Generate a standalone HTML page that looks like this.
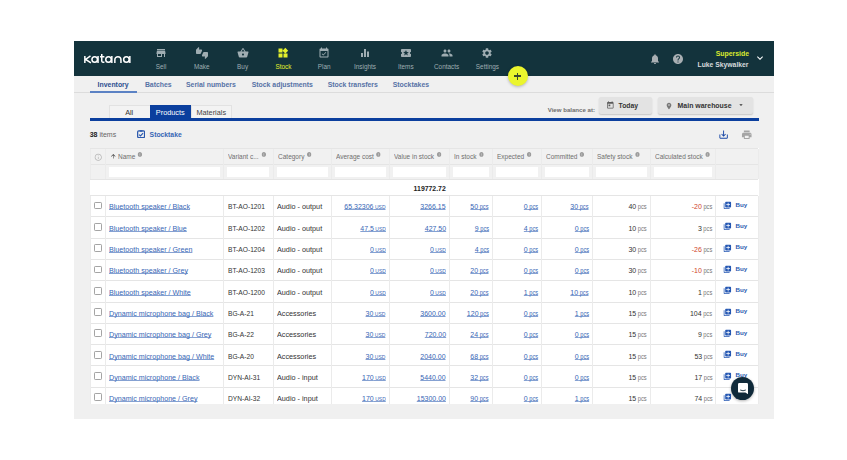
<!DOCTYPE html>
<html><head><meta charset="utf-8"><style>
html,body{margin:0;padding:0;width:847px;height:460px;overflow:hidden;background:#fff;position:relative;font-family:"Liberation Sans",sans-serif}
a{color:#3766b5}
</style></head><body>
<div style="position:absolute;left:74px;top:41px;width:700px;height:378px;background:#f0f0f0"></div>
<div style="position:absolute;left:74px;top:41px;width:700px;height:34.5px;background:#13333c"></div>
<svg style="position:absolute;left:0;top:0;width:847px;height:460px" viewBox="0 0 847 460"><g fill="none" stroke="#fff" stroke-width="1.5"><path d="M84.85 55.9V62.9M90.5 55.9L85.6 59.4L90.9 62.9"/><circle cx="94.7" cy="59.4" r="2.75"/><path d="M98.05 55.9V62.9"/><path d="M101.75 54V61.1Q101.75 62.15 102.8 62.15H104.4M100 56.65H104.4"/><circle cx="108.5" cy="59.4" r="2.75"/><path d="M111.85 55.9V62.9"/><path d="M114.85 62.9V59.7A3.05 3.05 0 0 1 120.95 59.7V62.9"/><circle cx="126.4" cy="59.4" r="2.75"/><path d="M129.85 55.9V62.9"/></g></svg>
<svg style="position:absolute;left:155.0px;top:46.5px;width:12px;height:12px" viewBox="0 0 24 24"><path fill="#9fadb2" d="M20 4H4v2h16V4zm1 10v-2l-1-5H4l-1 5v2h1v6h10v-6h4v6h2v-6h1zm-9 4H6v-4h6v4z"/></svg>
<div style="position:absolute;left:61.0px;width:200px;text-align:center;top:63.8px;font-size:6.4px;line-height:6.4px;color:#9fadb2;font-weight:400;white-space:nowrap">Sell</div>
<svg style="position:absolute;left:195.8px;top:46.5px;width:12px;height:12px" viewBox="0 0 24 24"><path fill="#9fadb2" d="M12 6c0-.55-.45-1-1-1H5.82l.66-3.18.02-.23c0-.31-.13-.59-.33-.8L5.38 0 .44 4.94C.17 5.21 0 5.59 0 6v6.5c0 .83.67 1.5 1.5 1.5h6.75c.62 0 1.15-.38 1.38-.91l2.26-5.29c.07-.17.11-.36.11-.55V6zm10.5 4h-6.750c-.62 0-1.15.38-1.38.91l-2.26 5.29c-.07.17-.11.36-.11.55V18c0 .55.45 1 1 1h5.18l-.66 3.18-.02.24c0 .31.13.59.33.8l.79.78 4.94-4.94c.27-.27.44-.65.44-1.06v-6.5c0-.83-.67-1.5-1.5-1.5z"/></svg>
<div style="position:absolute;left:101.80000000000001px;width:200px;text-align:center;top:63.8px;font-size:6.4px;line-height:6.4px;color:#9fadb2;font-weight:400;white-space:nowrap">Make</div>
<svg style="position:absolute;left:236.6px;top:46.5px;width:12px;height:12px" viewBox="0 0 24 24"><path fill="#9fadb2" d="M17.21 9l-4.38-6.56c-.19-.28-.51-.42-.83-.42-.32 0-.64.14-.83.43L6.79 9H2c-.55 0-1 .45-1 1 0 .09.01.18.04.27l2.54 9.27c.23.84 1 1.460 1.920 1.46h13c.92 0 1.69-.62 1.93-1.46l2.54-9.27L23 10c0-.55-.45-1-1-1h-4.79zM9 9l3-4.4L15 9H9zm3 8c-1.1 0-2-.9-2-2s.9-2 2-2 2 .9 2 2-.9 2-2 2z"/></svg>
<div style="position:absolute;left:142.6px;width:200px;text-align:center;top:63.8px;font-size:6.4px;line-height:6.4px;color:#9fadb2;font-weight:400;white-space:nowrap">Buy</div>
<svg style="position:absolute;left:277.4px;top:46.5px;width:12px;height:12px" viewBox="0 0 24 24"><path fill="#e3f02c" d="M13 13v8h8v-8h-8zM3 21h8v-8H3v8zM3 3v8h8V3H3zm13.66-1.31L11 7.34 16.66 13l5.66-5.66-5.66-5.65z"/></svg>
<div style="position:absolute;left:183.39999999999998px;width:200px;text-align:center;top:63.8px;font-size:6.4px;line-height:6.4px;color:#e3f02c;font-weight:400;white-space:nowrap">Stock</div>
<svg style="position:absolute;left:318.2px;top:46.5px;width:12px;height:12px" viewBox="0 0 24 24"><path fill="#9fadb2" d="M16.53 11.06L15.47 10l-4.88 4.88-2.12-2.12-1.06 1.06L10.59 17l5.94-5.94zM19 3h-1V1h-2v2H8V1H6v2H5c-1.11 0-1.99.9-1.99 2L3 19c0 1.1.89 2 2 2h14c1.1 0 2-.9 2-2V5c0-1.1-.9-2-2-2zm0 16H5V8h14v11z"/></svg>
<div style="position:absolute;left:224.2px;width:200px;text-align:center;top:63.8px;font-size:6.4px;line-height:6.4px;color:#9fadb2;font-weight:400;white-space:nowrap">Plan</div>
<svg style="position:absolute;left:359.0px;top:46.5px;width:12px;height:12px" viewBox="0 0 24 24"><path fill="#9fadb2" d="M10 20h4V4h-4v16zm-6 0h4v-8H4v8zM16 9v11h4V9h-4z"/></svg>
<div style="position:absolute;left:265.0px;width:200px;text-align:center;top:63.8px;font-size:6.4px;line-height:6.4px;color:#9fadb2;font-weight:400;white-space:nowrap">Insights</div>
<svg style="position:absolute;left:399.79999999999995px;top:46.5px;width:12px;height:12px" viewBox="0 0 24 24"><path fill="#9fadb2" d="M20 12c0-1.1.9-2 2-2V6c0-1.1-.9-2-2-2H4c-1.1 0-1.99.9-1.99 2v4c1.1 0 1.99.9 1.99 2s-.89 2-2 2v4c0 1.1.9 2 2 2h16c1.1 0 2-.9 2-2v-4c-1.1 0-2-.9-2-2zm-4.42 4.8L12 14.5l-3.58 2.3 1.08-4.12-3.29-2.69 4.24-.25L12 5.8l1.54 3.95 4.24.25-3.29 2.69 1.09 4.11z"/></svg>
<div style="position:absolute;left:305.79999999999995px;width:200px;text-align:center;top:63.8px;font-size:6.4px;line-height:6.4px;color:#9fadb2;font-weight:400;white-space:nowrap">Items</div>
<svg style="position:absolute;left:440.59999999999997px;top:46.5px;width:12px;height:12px" viewBox="0 0 24 24"><path fill="#9fadb2" d="M16 11c1.66 0 2.99-1.34 2.99-3S17.66 5 16 5c-1.66 0-3 1.34-3 3s1.34 3 3 3zm-8 0c1.66 0 2.99-1.34 2.99-3S9.66 5 8 5C6.34 5 5 6.34 5 8s1.34 3 3 3zm0 2c-2.33 0-7 1.17-7 3.5V19h14v-2.5c0-2.33-4.67-3.5-7-3.5zm8 0c-.29 0-.62.02-.97.05 1.16.84 1.970 1.97 1.97 3.45V19h6v-2.5c0-2.33-4.67-3.5-7-3.5z"/></svg>
<div style="position:absolute;left:346.59999999999997px;width:200px;text-align:center;top:63.8px;font-size:6.4px;line-height:6.4px;color:#9fadb2;font-weight:400;white-space:nowrap">Contacts</div>
<svg style="position:absolute;left:481.4px;top:46.5px;width:12px;height:12px" viewBox="0 0 24 24"><path fill="#9fadb2" d="M19.14 12.94c.04-.3.06-.61.06-.94 0-.32-.02-.64-.07-.94l2.03-1.58c.18-.14.23-.41.12-.61l-1.92-3.32c-.12-.22-.37-.29-.59-.22l-2.39.96c-.5-.38-1.03-.7-1.62-.94l-.36-2.54c-.04-.24-.24-.41-.48-.41h-3.84c-.24 0-.43.17-.47.41l-.36 2.54c-.59.24-1.13.57-1.62.94l-2.390-.96c-.22-.08-.47 0-.59.22L2.74 8.87c-.12.21-.08.47.12.61l2.03 1.58c-.05.3-.09.63-.09.94s.02.64.07.94l-2.03 1.58c-.18.14-.23.41-.12.61l1.92 3.32c.12.22.37.29.59.22l2.39-.96c.5.38 1.03.7 1.62.94l.36 2.54c.05.24.24.41.48.41h3.84c.24 0 .44-.17.47-.41l.36-2.54c.59-.24 1.13-.56 1.62-.94l2.39.96c.22.08.47 0 .59-.22l1.92-3.32c.12-.22.07-.47-.12-.61l-2.01-1.58zM12 15.6c-1.98 0-3.6-1.62-3.6-3.6s1.62-3.6 3.6-3.6 3.6 1.62 3.6 3.6-1.62 3.6-3.6 3.6z"/></svg>
<div style="position:absolute;left:387.4px;width:200px;text-align:center;top:63.8px;font-size:6.4px;line-height:6.4px;color:#9fadb2;font-weight:400;white-space:nowrap">Settings</div>
<div style="position:absolute;left:507.8px;top:66px;width:20px;height:20px;border-radius:50%;background:#ebf52d;box-shadow:0 1px 3px rgba(0,0,0,0.25)"></div>
<div style="position:absolute;left:514.3px;top:75.35px;width:7px;height:1.3px;background:#3a4530"></div>
<div style="position:absolute;left:517.15px;top:72.5px;width:1.3px;height:7px;background:#3a4530"></div>
<svg style="position:absolute;left:648.8px;top:52.6px;width:12px;height:12px" viewBox="0 0 24 24"><path fill="#a9afb3" d="M12 22c1.1 0 2-.9 2-2h-4c0 1.1.89 2 2 2zm6-6v-5c0-3.07-1.64-5.64-4.5-6.32V4c0-.83-.67-1.5-1.5-1.5s-1.5.67-1.5 1.5v.68C7.63 5.36 6 7.92 6 11v5l-2 2v1h16v-1l-2-2z"/></svg>
<svg style="position:absolute;left:672.2px;top:53.0px;width:12px;height:12px" viewBox="0 0 24 24"><path fill="#a9afb3" d="M12 2C6.48 2 2 6.48 2 12s4.48 10 10 10 10-4.48 10-10S17.52 2 12 2zm1 17h-2v-2h2v2zm2.07-7.75l-.9.92C13.45 12.9 13 13.5 13 15h-2v-.5c0-1.1.45-2.1 1.17-2.83l1.24-1.26c.37-.36.59-.86.59-1.41 0-1.1-.9-2-2-2s-2 .9-2 2H8c0-2.21 1.79-4 4-4s4 1.79 4 4c0 .88-.36 1.68-.93 2.25z"/></svg>
<div style="position:absolute;right:98px;top:51.4px;font-size:6.9px;line-height:6.9px;color:#d9ea2e;font-weight:700;white-space:nowrap">Superside</div>
<div style="position:absolute;right:98.5px;top:61.6px;font-size:6.8px;line-height:6.8px;color:#d6dbdd;font-weight:700;white-space:nowrap">Luke Skywalker</div>
<svg style="position:absolute;left:754.3px;top:52.3px;width:12px;height:12px" viewBox="0 0 24 24"><path fill="#ffffff" d="M16.59 8.59L12 13.17 7.41 8.59 6 10l6 6 6-6z"/></svg>
<div style="position:absolute;left:74px;top:92px;width:700px;height:1px;background:#dcdcdc"></div>
<div style="position:absolute;left:97.6px;top:81.6px;font-size:6.9px;line-height:6.9px;color:#2b4e8f;font-weight:700;white-space:nowrap">Inventory</div>
<div style="position:absolute;left:144.9px;top:81.6px;font-size:6.9px;line-height:6.9px;color:#5672a6;font-weight:700;white-space:nowrap">Batches</div>
<div style="position:absolute;left:186px;top:81.6px;font-size:6.9px;line-height:6.9px;color:#5672a6;font-weight:700;white-space:nowrap">Serial numbers</div>
<div style="position:absolute;left:251.7px;top:81.6px;font-size:6.9px;line-height:6.9px;color:#5672a6;font-weight:700;white-space:nowrap">Stock adjustments</div>
<div style="position:absolute;left:327.7px;top:81.6px;font-size:6.9px;line-height:6.9px;color:#5672a6;font-weight:700;white-space:nowrap">Stock transfers</div>
<div style="position:absolute;left:392.7px;top:81.6px;font-size:6.9px;line-height:6.9px;color:#5672a6;font-weight:700;white-space:nowrap">Stocktakes</div>
<div style="position:absolute;left:90px;top:91px;width:46.5px;height:2px;background:#5b82c4"></div>
<div style="position:absolute;left:109px;top:104.5px;width:81.5px;height:13.5px;background:#f3f3f3;border:0.5px solid #e2e2e2;border-bottom:none;box-sizing:border-box"></div>
<div style="position:absolute;left:190.5px;top:104.5px;width:41.5px;height:13.5px;background:#f3f3f3;border:0.5px solid #e2e2e2;border-bottom:none;box-sizing:border-box"></div>
<div style="position:absolute;left:150px;top:104.5px;width:40.5px;height:13.5px;background:#0b3f9e"></div>
<div style="position:absolute;left:29.19999999999999px;width:200px;text-align:center;top:108.9px;font-size:7.3px;line-height:7.3px;color:#333;font-weight:400;white-space:nowrap">All</div>
<div style="position:absolute;left:70.25px;width:200px;text-align:center;top:108.9px;font-size:7.3px;line-height:7.3px;color:#fff;font-weight:400;white-space:nowrap">Products</div>
<div style="position:absolute;left:111.25px;width:200px;text-align:center;top:108.9px;font-size:7.3px;line-height:7.3px;color:#444;font-weight:400;white-space:nowrap">Materials</div>
<div style="position:absolute;left:89.5px;top:118px;width:669px;height:2.8px;background:#0b3f9e"></div>
<div style="position:absolute;right:252px;top:107.4px;font-size:6.1px;line-height:6.1px;color:#6e6e6e;font-weight:700;white-space:nowrap">View balance at:</div>
<div style="position:absolute;left:598.5px;top:97.3px;width:53px;height:17px;background:#e3e3e3;border-radius:2px;box-shadow:0 1px 1.5px rgba(0,0,0,0.18)"></div>
<svg style="position:absolute;left:606.3px;top:101.3px;width:8.6px;height:8.6px" viewBox="0 0 24 24"><path fill="#5a5a5a" d="M19 3h-1V1h-2v2H8V1H6v2H5c-1.11 0-1.99.9-1.99 2L3 19c0 1.1.89 2 2 2h14c1.1 0 2-.9 2-2V5c0-1.1-.9-2-2-2zm0 16H5V8h14v11zM7 10h5v5H7z"/></svg>
<div style="position:absolute;left:618.5px;top:103px;font-size:6.8px;line-height:6.8px;color:#333;font-weight:700;white-space:nowrap">Today</div>
<div style="position:absolute;left:657.8px;top:97.4px;width:95px;height:17px;background:#e3e3e3;border-radius:2px;box-shadow:0 1px 1.5px rgba(0,0,0,0.18)"></div>
<svg style="position:absolute;left:665.2px;top:101.5px;width:8px;height:8px" viewBox="0 0 24 24"><path fill="#777" d="M12 2C8.13 2 5 5.130 5 9c0 5.25 7 13 7 13s7-7.75 7-13c0-3.87-3.13-7-7-7zm0 9.5c-1.38 0-2.5-1.12-2.5-2.5s1.12-2.5 2.5-2.5 2.5 1.12 2.5 2.5-1.12 2.5-2.5 2.5z"/></svg>
<div style="position:absolute;left:677.6px;top:103px;font-size:6.95px;line-height:6.95px;color:#333;font-weight:700;white-space:nowrap">Main warehouse</div>
<svg style="position:absolute;left:737px;top:101px;width:8px;height:8px" viewBox="0 0 24 24"><path fill="#333" d="M7 10l5 5 5-5z"/></svg>
<div style="position:absolute;left:89.7px;top:130.6px;font-size:7px;line-height:7px;white-space:nowrap"><b style="color:#222">38</b> <span style="color:#666">items</span></div>
<svg style="position:absolute;left:136.8px;top:129.8px;width:8.2px;height:8.2px" viewBox="0 0 8.2 8.2"><rect x="0.65" y="1.0" width="6.9" height="6.55" rx="1" fill="none" stroke="#2a58ad" stroke-width="1.25"/><rect x="2.5" y="0.2" width="3.2" height="1.5" rx="0.6" fill="#2a58ad"/><path d="M2.1 4.6L3.5 5.9L6.1 3.1" fill="none" stroke="#2a58ad" stroke-width="1.15"/></svg>
<div style="position:absolute;left:149.6px;top:131.6px;font-size:6.8px;line-height:6.8px;color:#3766b5;font-weight:700;white-space:nowrap">Stocktake</div>
<svg style="position:absolute;left:717.9px;top:128.6px;width:11.2px;height:11.2px" viewBox="0 0 24 24"><path fill="#1746a6" d="M19 12v7H5v-7H3v7c0 1.1.9 2 2 2h14c1.1 0 2-.9 2-2v-7h-2zm-6 .67l2.59-2.58L17 11.5l-5 5-5-5 1.41-1.41L11 12.67V3h2z"/></svg>
<svg style="position:absolute;left:741.2px;top:129.1px;width:11.5px;height:11.5px" viewBox="0 0 24 24"><path fill="#a5a5a5" d="M19 8H5c-1.66 0-3 1.34-3 3v6h4v4h12v-4h4v-6c0-1.66-1.34-3-3-3zm-3 11H8v-5h8v5zm3-7c-.55 0-1-.45-1-1s.45-1 1-1 1 .45 1 1-.45 1-1 1zm-1-9H6v4h12V3z"/></svg>
<div style="position:absolute;left:89.5px;top:148.0px;width:669.4px;height:255.60000000000002px;overflow:hidden;background:#fff">
<div style="position:absolute;left:0;top:0;width:668.4px;height:31.2px;background:#f1f1f1"></div>
<div style="position:absolute;left:0;top:0.0px;width:668.4px;height:1px;background:#e5e5e5"></div>
<div style="position:absolute;left:0;top:15.8px;width:668.4px;height:1px;background:#e5e5e5"></div>
<div style="position:absolute;left:0;top:30.7px;width:668.4px;height:1px;background:#e5e5e5"></div>
<div style="position:absolute;left:0;top:47.0px;width:668.4px;height:1px;background:#e5e5e5"></div>
<div style="position:absolute;left:0;top:68.3px;width:668.4px;height:1px;background:#e5e5e5"></div>
<div style="position:absolute;left:0;top:89.6px;width:668.4px;height:1px;background:#e5e5e5"></div>
<div style="position:absolute;left:0;top:110.9px;width:668.4px;height:1px;background:#e5e5e5"></div>
<div style="position:absolute;left:0;top:132.2px;width:668.4px;height:1px;background:#e5e5e5"></div>
<div style="position:absolute;left:0;top:153.5px;width:668.4px;height:1px;background:#e5e5e5"></div>
<div style="position:absolute;left:0;top:174.8px;width:668.4px;height:1px;background:#e5e5e5"></div>
<div style="position:absolute;left:0;top:196.1px;width:668.4px;height:1px;background:#e5e5e5"></div>
<div style="position:absolute;left:0;top:217.4px;width:668.4px;height:1px;background:#e5e5e5"></div>
<div style="position:absolute;left:0;top:238.7px;width:668.4px;height:1px;background:#e5e5e5"></div>
<div style="position:absolute;left:0;top:260.0px;width:668.4px;height:1px;background:#e5e5e5"></div>
<div style="position:absolute;left:0.0px;top:0.5px;width:1px;height:30.69999999999999px;background:#ebebeb"></div>
<div style="position:absolute;left:0.0px;top:47.5px;width:1px;height:208.10000000000002px;background:#ebebeb"></div>
<div style="position:absolute;left:15.7px;top:0.5px;width:1px;height:30.69999999999999px;background:#ebebeb"></div>
<div style="position:absolute;left:15.7px;top:47.5px;width:1px;height:208.10000000000002px;background:#ebebeb"></div>
<div style="position:absolute;left:133.6px;top:0.5px;width:1px;height:30.69999999999999px;background:#ebebeb"></div>
<div style="position:absolute;left:133.6px;top:47.5px;width:1px;height:208.10000000000002px;background:#ebebeb"></div>
<div style="position:absolute;left:183.2px;top:0.5px;width:1px;height:30.69999999999999px;background:#ebebeb"></div>
<div style="position:absolute;left:183.2px;top:47.5px;width:1px;height:208.10000000000002px;background:#ebebeb"></div>
<div style="position:absolute;left:241.5px;top:0.5px;width:1px;height:30.69999999999999px;background:#ebebeb"></div>
<div style="position:absolute;left:241.5px;top:47.5px;width:1px;height:208.10000000000002px;background:#ebebeb"></div>
<div style="position:absolute;left:299.5px;top:0.5px;width:1px;height:30.69999999999999px;background:#ebebeb"></div>
<div style="position:absolute;left:299.5px;top:47.5px;width:1px;height:208.10000000000002px;background:#ebebeb"></div>
<div style="position:absolute;left:359.6px;top:0.5px;width:1px;height:30.69999999999999px;background:#ebebeb"></div>
<div style="position:absolute;left:359.6px;top:47.5px;width:1px;height:208.10000000000002px;background:#ebebeb"></div>
<div style="position:absolute;left:402.5px;top:0.5px;width:1px;height:30.69999999999999px;background:#ebebeb"></div>
<div style="position:absolute;left:402.5px;top:47.5px;width:1px;height:208.10000000000002px;background:#ebebeb"></div>
<div style="position:absolute;left:451.5px;top:0.5px;width:1px;height:30.69999999999999px;background:#ebebeb"></div>
<div style="position:absolute;left:451.5px;top:47.5px;width:1px;height:208.10000000000002px;background:#ebebeb"></div>
<div style="position:absolute;left:502.5px;top:0.5px;width:1px;height:30.69999999999999px;background:#ebebeb"></div>
<div style="position:absolute;left:502.5px;top:47.5px;width:1px;height:208.10000000000002px;background:#ebebeb"></div>
<div style="position:absolute;left:560.4px;top:0.5px;width:1px;height:30.69999999999999px;background:#ebebeb"></div>
<div style="position:absolute;left:560.4px;top:47.5px;width:1px;height:208.10000000000002px;background:#ebebeb"></div>
<div style="position:absolute;left:625.5px;top:0.5px;width:1px;height:30.69999999999999px;background:#ebebeb"></div>
<div style="position:absolute;left:625.5px;top:47.5px;width:1px;height:208.10000000000002px;background:#ebebeb"></div>
<div style="position:absolute;left:668.4px;top:0.5px;width:1px;height:30.69999999999999px;background:#ebebeb"></div>
<div style="position:absolute;left:668.4px;top:47.5px;width:1px;height:208.10000000000002px;background:#ebebeb"></div>
<div style="position:absolute;left:19.5px;top:19.0px;width:110.79999999999998px;height:10px;background:#fff"></div>
<div style="position:absolute;left:137.4px;top:19.0px;width:42.49999999999997px;height:10px;background:#fff"></div>
<div style="position:absolute;left:187.0px;top:19.0px;width:51.19999999999999px;height:10px;background:#fff"></div>
<div style="position:absolute;left:245.3px;top:19.0px;width:50.89999999999998px;height:10px;background:#fff"></div>
<div style="position:absolute;left:303.3px;top:19.0px;width:53.0px;height:10px;background:#fff"></div>
<div style="position:absolute;left:363.4px;top:19.0px;width:35.799999999999955px;height:10px;background:#fff"></div>
<div style="position:absolute;left:406.3px;top:19.0px;width:41.900000000000034px;height:10px;background:#fff"></div>
<div style="position:absolute;left:455.3px;top:19.0px;width:43.90000000000009px;height:10px;background:#fff"></div>
<div style="position:absolute;left:506.3px;top:19.0px;width:50.80000000000007px;height:10px;background:#fff"></div>
<div style="position:absolute;left:564.2px;top:19.0px;width:58.000000000000114px;height:10px;background:#fff"></div>
<svg style="position:absolute;left:4.1px;top:4.8px;width:8.5px;height:8.5px" viewBox="0 0 24 24"><path fill="#b5b5b5" d="M11 7h2v2h-2zm0 4h2v6h-2zm1-9C6.48 2 2 6.48 2 12s4.48 10 10 10 10-4.48 10-10S17.52 2 12 2zm0 18c-4.41 0-8-3.59-8-8s3.59-8 8-8 8 3.59 8 8-3.59 8-8 8z"/></svg>
<svg style="position:absolute;left:20.6px;top:5.1px;width:6.6px;height:6.6px" viewBox="0 0 24 24"><path fill="#444" d="M4 12l1.41 1.41L11 7.83V20h2V7.83l5.58 5.59L20 12l-8-8-8 8z"/></svg>
<div style="position:absolute;left:28.2px;top:4.6px;font-size:7px;line-height:7px;color:#6f6f6f;white-space:nowrap"><span style="position:relative;display:inline-block;transform:scaleX(0.93);transform-origin:left">Name<svg style="position:absolute;width:5.1px;height:4.8px;right:-7.7px;top:-0.5px" viewBox="2 2 20 20"><path fill="#9c9c9c" d="M12 2C6.48 2 2 6.48 2 12s4.48 10 10 10 10-4.48 10-10S17.52 2 12 2zm1 15h-2v-6h2v6zm0-8h-2V7h2v2z"/></svg></span></div>
<div style="position:absolute;left:138.4px;top:4.6px;font-size:7px;line-height:7px;color:#6f6f6f;white-space:nowrap"><span style="position:relative;display:inline-block;transform:scaleX(0.93);transform-origin:left">Variant c...<svg style="position:absolute;width:5.1px;height:4.8px;right:-7.7px;top:-0.5px" viewBox="2 2 20 20"><path fill="#9c9c9c" d="M12 2C6.48 2 2 6.48 2 12s4.48 10 10 10 10-4.48 10-10S17.52 2 12 2zm1 15h-2v-6h2v6zm0-8h-2V7h2v2z"/></svg></span></div>
<div style="position:absolute;left:188.0px;top:4.6px;font-size:7px;line-height:7px;color:#6f6f6f;white-space:nowrap"><span style="position:relative;display:inline-block;transform:scaleX(0.93);transform-origin:left">Category<svg style="position:absolute;width:5.1px;height:4.8px;right:-7.7px;top:-0.5px" viewBox="2 2 20 20"><path fill="#9c9c9c" d="M12 2C6.48 2 2 6.48 2 12s4.48 10 10 10 10-4.48 10-10S17.52 2 12 2zm1 15h-2v-6h2v6zm0-8h-2V7h2v2z"/></svg></span></div>
<div style="position:absolute;left:246.3px;top:4.6px;font-size:7px;line-height:7px;color:#6f6f6f;white-space:nowrap"><span style="position:relative;display:inline-block;transform:scaleX(0.93);transform-origin:left">Average cost<svg style="position:absolute;width:5.1px;height:4.8px;right:-7.7px;top:-0.5px" viewBox="2 2 20 20"><path fill="#9c9c9c" d="M12 2C6.48 2 2 6.48 2 12s4.48 10 10 10 10-4.48 10-10S17.52 2 12 2zm1 15h-2v-6h2v6zm0-8h-2V7h2v2z"/></svg></span></div>
<div style="position:absolute;left:304.3px;top:4.6px;font-size:7px;line-height:7px;color:#6f6f6f;white-space:nowrap"><span style="position:relative;display:inline-block;transform:scaleX(0.93);transform-origin:left">Value in stock<svg style="position:absolute;width:5.1px;height:4.8px;right:-7.7px;top:-0.5px" viewBox="2 2 20 20"><path fill="#9c9c9c" d="M12 2C6.48 2 2 6.48 2 12s4.48 10 10 10 10-4.48 10-10S17.52 2 12 2zm1 15h-2v-6h2v6zm0-8h-2V7h2v2z"/></svg></span></div>
<div style="position:absolute;left:364.4px;top:4.6px;font-size:7px;line-height:7px;color:#6f6f6f;white-space:nowrap"><span style="position:relative;display:inline-block;transform:scaleX(0.93);transform-origin:left">In stock<svg style="position:absolute;width:5.1px;height:4.8px;right:-7.7px;top:-0.5px" viewBox="2 2 20 20"><path fill="#9c9c9c" d="M12 2C6.48 2 2 6.48 2 12s4.48 10 10 10 10-4.48 10-10S17.52 2 12 2zm1 15h-2v-6h2v6zm0-8h-2V7h2v2z"/></svg></span></div>
<div style="position:absolute;left:407.3px;top:4.6px;font-size:7px;line-height:7px;color:#6f6f6f;white-space:nowrap"><span style="position:relative;display:inline-block;transform:scaleX(0.93);transform-origin:left">Expected<svg style="position:absolute;width:5.1px;height:4.8px;right:-7.7px;top:-0.5px" viewBox="2 2 20 20"><path fill="#9c9c9c" d="M12 2C6.48 2 2 6.48 2 12s4.48 10 10 10 10-4.48 10-10S17.52 2 12 2zm1 15h-2v-6h2v6zm0-8h-2V7h2v2z"/></svg></span></div>
<div style="position:absolute;left:456.3px;top:4.6px;font-size:7px;line-height:7px;color:#6f6f6f;white-space:nowrap"><span style="position:relative;display:inline-block;transform:scaleX(0.93);transform-origin:left">Committed<svg style="position:absolute;width:5.1px;height:4.8px;right:-7.7px;top:-0.5px" viewBox="2 2 20 20"><path fill="#9c9c9c" d="M12 2C6.48 2 2 6.48 2 12s4.48 10 10 10 10-4.48 10-10S17.52 2 12 2zm1 15h-2v-6h2v6zm0-8h-2V7h2v2z"/></svg></span></div>
<div style="position:absolute;left:507.3px;top:4.6px;font-size:7px;line-height:7px;color:#6f6f6f;white-space:nowrap"><span style="position:relative;display:inline-block;transform:scaleX(0.93);transform-origin:left">Safety stock<svg style="position:absolute;width:5.1px;height:4.8px;right:-7.7px;top:-0.5px" viewBox="2 2 20 20"><path fill="#9c9c9c" d="M12 2C6.48 2 2 6.48 2 12s4.48 10 10 10 10-4.48 10-10S17.52 2 12 2zm1 15h-2v-6h2v6zm0-8h-2V7h2v2z"/></svg></span></div>
<div style="position:absolute;left:565.2px;top:4.6px;font-size:7px;line-height:7px;color:#6f6f6f;white-space:nowrap"><span style="position:relative;display:inline-block;transform:scaleX(0.93);transform-origin:left">Calculated stock<svg style="position:absolute;width:5.1px;height:4.8px;right:-7.7px;top:-0.5px" viewBox="2 2 20 20"><path fill="#9c9c9c" d="M12 2C6.48 2 2 6.48 2 12s4.48 10 10 10 10-4.48 10-10S17.52 2 12 2zm1 15h-2v-6h2v6zm0-8h-2V7h2v2z"/></svg></span></div>
<div style="position:absolute;right:313.1px;top:36.5px;font-size:6.9px;line-height:7px;color:#222;font-weight:700">119772.72</div>
<div style="position:absolute;left:4.6px;top:53.6px;width:7.9px;height:7.9px;box-sizing:border-box;border:1.2px solid #a4a4a4;border-radius:1.2px;background:#fff"></div>
<div style="position:absolute;left:19.6px;top:55.4px;font-size:7.9px;line-height:7px;color:#3766b5;white-space:nowrap"><span style="display:inline-block;transform:scaleX(0.905);transform-origin:left"><span style="text-decoration:underline;text-underline-offset:0.4px;text-decoration-thickness:0.5px;text-decoration-color:rgba(52,99,180,0.6);text-decoration-skip-ink:none">Bluetooth speaker / Black</span></span></div>
<div style="position:absolute;left:138.1px;top:55.4px;font-size:7.9px;line-height:7px;color:#333;white-space:nowrap"><span style="display:inline-block;transform:scaleX(0.842);transform-origin:left">BT-AO-1201</span></div>
<div style="position:absolute;left:187.7px;top:55.4px;font-size:7.9px;line-height:7px;color:#333;white-space:nowrap"><span style="display:inline-block;transform:scaleX(0.919);transform-origin:left">Audio - output</span></div>
<div style="position:absolute;right:373.1px;top:55.4px;font-size:7.9px;line-height:7px;color:#3766b5;white-space:nowrap"><span style="display:inline-block;transform:scaleX(0.885);transform-origin:right"><span style="text-decoration:underline;text-underline-offset:0.4px;text-decoration-thickness:0.5px;text-decoration-color:rgba(52,99,180,0.6);text-decoration-skip-ink:none">65.32306<span style="font-size:5.7px"> USD</span></span></span></div>
<div style="position:absolute;right:313.0px;top:55.4px;font-size:7.9px;line-height:7px;color:#3766b5;white-space:nowrap"><span style="display:inline-block;transform:scaleX(0.885);transform-origin:right"><span style="text-decoration:underline;text-underline-offset:0.4px;text-decoration-thickness:0.5px;text-decoration-color:rgba(52,99,180,0.6);text-decoration-skip-ink:none">3266.15</span></span></div>
<div style="position:absolute;right:270.1px;top:55.4px;font-size:7.9px;line-height:7px;color:#3766b5;white-space:nowrap"><span style="display:inline-block;transform:scaleX(0.885);transform-origin:right"><span style="text-decoration:underline;text-underline-offset:0.4px;text-decoration-thickness:0.5px;text-decoration-color:rgba(52,99,180,0.6);text-decoration-skip-ink:none">50<span style="font-size:6.4px"> pcs</span></span></span></div>
<div style="position:absolute;right:221.1px;top:55.4px;font-size:7.9px;line-height:7px;color:#3766b5;white-space:nowrap"><span style="display:inline-block;transform:scaleX(0.885);transform-origin:right"><span style="text-decoration:underline;text-underline-offset:0.4px;text-decoration-thickness:0.5px;text-decoration-color:rgba(52,99,180,0.6);text-decoration-skip-ink:none">0<span style="font-size:6.4px"> pcs</span></span></span></div>
<div style="position:absolute;right:170.1px;top:55.4px;font-size:7.9px;line-height:7px;color:#3766b5;white-space:nowrap"><span style="display:inline-block;transform:scaleX(0.885);transform-origin:right"><span style="text-decoration:underline;text-underline-offset:0.4px;text-decoration-thickness:0.5px;text-decoration-color:rgba(52,99,180,0.6);text-decoration-skip-ink:none">30<span style="font-size:6.4px"> pcs</span></span></span></div>
<div style="position:absolute;right:111.8px;top:55.4px;font-size:7.9px;line-height:7px;color:#333;white-space:nowrap"><span style="display:inline-block;transform:scaleX(0.885);transform-origin:right">40<span style="font-size:6.5px;color:#777"> pcs</span></span></div>
<div style="position:absolute;right:46.7px;top:55.4px;font-size:7.9px;line-height:7px;color:#d0452b;white-space:nowrap"><span style="display:inline-block;transform:scaleX(0.885);transform-origin:right">-20<span style="font-size:6.5px;color:#777"> pcs</span></span></div>
<svg style="position:absolute;left:633.4px;top:53.1px;width:8.8px;height:8.8px" viewBox="0 0 24 24"><path fill="#2457b3" d="M4 6H2v14c0 1.1.9 2 2 2h14v-2H4V6zm16-4H8c-1.1 0-2 .9-2 2v12c0 1.1.9 2 2 2h12c1.1 0 2-.9 2-2V4c0-1.1-.9-2-2-2zm-1 9h-4v4h-2v-4H9V9h4V5h2v4h4v2z"/></svg>
<div style="position:absolute;left:646.1px;top:52.8px;font-size:6.2px;line-height:7px;color:#2c5cb0;font-weight:700;white-space:nowrap">Buy</div>
<div style="position:absolute;left:4.6px;top:74.9px;width:7.9px;height:7.9px;box-sizing:border-box;border:1.2px solid #a4a4a4;border-radius:1.2px;background:#fff"></div>
<div style="position:absolute;left:19.6px;top:76.7px;font-size:7.9px;line-height:7px;color:#3766b5;white-space:nowrap"><span style="display:inline-block;transform:scaleX(0.905);transform-origin:left"><span style="text-decoration:underline;text-underline-offset:0.4px;text-decoration-thickness:0.5px;text-decoration-color:rgba(52,99,180,0.6);text-decoration-skip-ink:none">Bluetooth speaker / Blue</span></span></div>
<div style="position:absolute;left:138.1px;top:76.7px;font-size:7.9px;line-height:7px;color:#333;white-space:nowrap"><span style="display:inline-block;transform:scaleX(0.842);transform-origin:left">BT-AO-1202</span></div>
<div style="position:absolute;left:187.7px;top:76.7px;font-size:7.9px;line-height:7px;color:#333;white-space:nowrap"><span style="display:inline-block;transform:scaleX(0.919);transform-origin:left">Audio - output</span></div>
<div style="position:absolute;right:373.1px;top:76.7px;font-size:7.9px;line-height:7px;color:#3766b5;white-space:nowrap"><span style="display:inline-block;transform:scaleX(0.885);transform-origin:right"><span style="text-decoration:underline;text-underline-offset:0.4px;text-decoration-thickness:0.5px;text-decoration-color:rgba(52,99,180,0.6);text-decoration-skip-ink:none">47.5<span style="font-size:5.7px"> USD</span></span></span></div>
<div style="position:absolute;right:313.0px;top:76.7px;font-size:7.9px;line-height:7px;color:#3766b5;white-space:nowrap"><span style="display:inline-block;transform:scaleX(0.885);transform-origin:right"><span style="text-decoration:underline;text-underline-offset:0.4px;text-decoration-thickness:0.5px;text-decoration-color:rgba(52,99,180,0.6);text-decoration-skip-ink:none">427.50</span></span></div>
<div style="position:absolute;right:270.1px;top:76.7px;font-size:7.9px;line-height:7px;color:#3766b5;white-space:nowrap"><span style="display:inline-block;transform:scaleX(0.885);transform-origin:right"><span style="text-decoration:underline;text-underline-offset:0.4px;text-decoration-thickness:0.5px;text-decoration-color:rgba(52,99,180,0.6);text-decoration-skip-ink:none">9<span style="font-size:6.4px"> pcs</span></span></span></div>
<div style="position:absolute;right:221.1px;top:76.7px;font-size:7.9px;line-height:7px;color:#3766b5;white-space:nowrap"><span style="display:inline-block;transform:scaleX(0.885);transform-origin:right"><span style="text-decoration:underline;text-underline-offset:0.4px;text-decoration-thickness:0.5px;text-decoration-color:rgba(52,99,180,0.6);text-decoration-skip-ink:none">4<span style="font-size:6.4px"> pcs</span></span></span></div>
<div style="position:absolute;right:170.1px;top:76.7px;font-size:7.9px;line-height:7px;color:#3766b5;white-space:nowrap"><span style="display:inline-block;transform:scaleX(0.885);transform-origin:right"><span style="text-decoration:underline;text-underline-offset:0.4px;text-decoration-thickness:0.5px;text-decoration-color:rgba(52,99,180,0.6);text-decoration-skip-ink:none">0<span style="font-size:6.4px"> pcs</span></span></span></div>
<div style="position:absolute;right:111.8px;top:76.7px;font-size:7.9px;line-height:7px;color:#333;white-space:nowrap"><span style="display:inline-block;transform:scaleX(0.885);transform-origin:right">10<span style="font-size:6.5px;color:#777"> pcs</span></span></div>
<div style="position:absolute;right:46.7px;top:76.7px;font-size:7.9px;line-height:7px;color:#333;white-space:nowrap"><span style="display:inline-block;transform:scaleX(0.885);transform-origin:right">3<span style="font-size:6.5px;color:#777"> pcs</span></span></div>
<svg style="position:absolute;left:633.4px;top:74.4px;width:8.8px;height:8.8px" viewBox="0 0 24 24"><path fill="#2457b3" d="M4 6H2v14c0 1.1.9 2 2 2h14v-2H4V6zm16-4H8c-1.1 0-2 .9-2 2v12c0 1.1.9 2 2 2h12c1.1 0 2-.9 2-2V4c0-1.1-.9-2-2-2zm-1 9h-4v4h-2v-4H9V9h4V5h2v4h4v2z"/></svg>
<div style="position:absolute;left:646.1px;top:74.1px;font-size:6.2px;line-height:7px;color:#2c5cb0;font-weight:700;white-space:nowrap">Buy</div>
<div style="position:absolute;left:4.6px;top:96.2px;width:7.9px;height:7.9px;box-sizing:border-box;border:1.2px solid #a4a4a4;border-radius:1.2px;background:#fff"></div>
<div style="position:absolute;left:19.6px;top:98.0px;font-size:7.9px;line-height:7px;color:#3766b5;white-space:nowrap"><span style="display:inline-block;transform:scaleX(0.905);transform-origin:left"><span style="text-decoration:underline;text-underline-offset:0.4px;text-decoration-thickness:0.5px;text-decoration-color:rgba(52,99,180,0.6);text-decoration-skip-ink:none">Bluetooth speaker / Green</span></span></div>
<div style="position:absolute;left:138.1px;top:98.0px;font-size:7.9px;line-height:7px;color:#333;white-space:nowrap"><span style="display:inline-block;transform:scaleX(0.842);transform-origin:left">BT-AO-1204</span></div>
<div style="position:absolute;left:187.7px;top:98.0px;font-size:7.9px;line-height:7px;color:#333;white-space:nowrap"><span style="display:inline-block;transform:scaleX(0.919);transform-origin:left">Audio - output</span></div>
<div style="position:absolute;right:373.1px;top:98.0px;font-size:7.9px;line-height:7px;color:#3766b5;white-space:nowrap"><span style="display:inline-block;transform:scaleX(0.885);transform-origin:right"><span style="text-decoration:underline;text-underline-offset:0.4px;text-decoration-thickness:0.5px;text-decoration-color:rgba(52,99,180,0.6);text-decoration-skip-ink:none">0<span style="font-size:5.7px"> USD</span></span></span></div>
<div style="position:absolute;right:313.0px;top:98.0px;font-size:7.9px;line-height:7px;color:#3766b5;white-space:nowrap"><span style="display:inline-block;transform:scaleX(0.885);transform-origin:right"><span style="text-decoration:underline;text-underline-offset:0.4px;text-decoration-thickness:0.5px;text-decoration-color:rgba(52,99,180,0.6);text-decoration-skip-ink:none">0<span style="font-size:5.7px"> USD</span></span></span></div>
<div style="position:absolute;right:270.1px;top:98.0px;font-size:7.9px;line-height:7px;color:#3766b5;white-space:nowrap"><span style="display:inline-block;transform:scaleX(0.885);transform-origin:right"><span style="text-decoration:underline;text-underline-offset:0.4px;text-decoration-thickness:0.5px;text-decoration-color:rgba(52,99,180,0.6);text-decoration-skip-ink:none">4<span style="font-size:6.4px"> pcs</span></span></span></div>
<div style="position:absolute;right:221.1px;top:98.0px;font-size:7.9px;line-height:7px;color:#3766b5;white-space:nowrap"><span style="display:inline-block;transform:scaleX(0.885);transform-origin:right"><span style="text-decoration:underline;text-underline-offset:0.4px;text-decoration-thickness:0.5px;text-decoration-color:rgba(52,99,180,0.6);text-decoration-skip-ink:none">0<span style="font-size:6.4px"> pcs</span></span></span></div>
<div style="position:absolute;right:170.1px;top:98.0px;font-size:7.9px;line-height:7px;color:#3766b5;white-space:nowrap"><span style="display:inline-block;transform:scaleX(0.885);transform-origin:right"><span style="text-decoration:underline;text-underline-offset:0.4px;text-decoration-thickness:0.5px;text-decoration-color:rgba(52,99,180,0.6);text-decoration-skip-ink:none">0<span style="font-size:6.4px"> pcs</span></span></span></div>
<div style="position:absolute;right:111.8px;top:98.0px;font-size:7.9px;line-height:7px;color:#333;white-space:nowrap"><span style="display:inline-block;transform:scaleX(0.885);transform-origin:right">30<span style="font-size:6.5px;color:#777"> pcs</span></span></div>
<div style="position:absolute;right:46.7px;top:98.0px;font-size:7.9px;line-height:7px;color:#d0452b;white-space:nowrap"><span style="display:inline-block;transform:scaleX(0.885);transform-origin:right">-26<span style="font-size:6.5px;color:#777"> pcs</span></span></div>
<svg style="position:absolute;left:633.4px;top:95.7px;width:8.8px;height:8.8px" viewBox="0 0 24 24"><path fill="#2457b3" d="M4 6H2v14c0 1.1.9 2 2 2h14v-2H4V6zm16-4H8c-1.1 0-2 .9-2 2v12c0 1.1.9 2 2 2h12c1.1 0 2-.9 2-2V4c0-1.1-.9-2-2-2zm-1 9h-4v4h-2v-4H9V9h4V5h2v4h4v2z"/></svg>
<div style="position:absolute;left:646.1px;top:95.4px;font-size:6.2px;line-height:7px;color:#2c5cb0;font-weight:700;white-space:nowrap">Buy</div>
<div style="position:absolute;left:4.6px;top:117.5px;width:7.9px;height:7.9px;box-sizing:border-box;border:1.2px solid #a4a4a4;border-radius:1.2px;background:#fff"></div>
<div style="position:absolute;left:19.6px;top:119.3px;font-size:7.9px;line-height:7px;color:#3766b5;white-space:nowrap"><span style="display:inline-block;transform:scaleX(0.905);transform-origin:left"><span style="text-decoration:underline;text-underline-offset:0.4px;text-decoration-thickness:0.5px;text-decoration-color:rgba(52,99,180,0.6);text-decoration-skip-ink:none">Bluetooth speaker / Grey</span></span></div>
<div style="position:absolute;left:138.1px;top:119.3px;font-size:7.9px;line-height:7px;color:#333;white-space:nowrap"><span style="display:inline-block;transform:scaleX(0.842);transform-origin:left">BT-AO-1203</span></div>
<div style="position:absolute;left:187.7px;top:119.3px;font-size:7.9px;line-height:7px;color:#333;white-space:nowrap"><span style="display:inline-block;transform:scaleX(0.919);transform-origin:left">Audio - output</span></div>
<div style="position:absolute;right:373.1px;top:119.3px;font-size:7.9px;line-height:7px;color:#3766b5;white-space:nowrap"><span style="display:inline-block;transform:scaleX(0.885);transform-origin:right"><span style="text-decoration:underline;text-underline-offset:0.4px;text-decoration-thickness:0.5px;text-decoration-color:rgba(52,99,180,0.6);text-decoration-skip-ink:none">0<span style="font-size:5.7px"> USD</span></span></span></div>
<div style="position:absolute;right:313.0px;top:119.3px;font-size:7.9px;line-height:7px;color:#3766b5;white-space:nowrap"><span style="display:inline-block;transform:scaleX(0.885);transform-origin:right"><span style="text-decoration:underline;text-underline-offset:0.4px;text-decoration-thickness:0.5px;text-decoration-color:rgba(52,99,180,0.6);text-decoration-skip-ink:none">0<span style="font-size:5.7px"> USD</span></span></span></div>
<div style="position:absolute;right:270.1px;top:119.3px;font-size:7.9px;line-height:7px;color:#3766b5;white-space:nowrap"><span style="display:inline-block;transform:scaleX(0.885);transform-origin:right"><span style="text-decoration:underline;text-underline-offset:0.4px;text-decoration-thickness:0.5px;text-decoration-color:rgba(52,99,180,0.6);text-decoration-skip-ink:none">20<span style="font-size:6.4px"> pcs</span></span></span></div>
<div style="position:absolute;right:221.1px;top:119.3px;font-size:7.9px;line-height:7px;color:#3766b5;white-space:nowrap"><span style="display:inline-block;transform:scaleX(0.885);transform-origin:right"><span style="text-decoration:underline;text-underline-offset:0.4px;text-decoration-thickness:0.5px;text-decoration-color:rgba(52,99,180,0.6);text-decoration-skip-ink:none">0<span style="font-size:6.4px"> pcs</span></span></span></div>
<div style="position:absolute;right:170.1px;top:119.3px;font-size:7.9px;line-height:7px;color:#3766b5;white-space:nowrap"><span style="display:inline-block;transform:scaleX(0.885);transform-origin:right"><span style="text-decoration:underline;text-underline-offset:0.4px;text-decoration-thickness:0.5px;text-decoration-color:rgba(52,99,180,0.6);text-decoration-skip-ink:none">0<span style="font-size:6.4px"> pcs</span></span></span></div>
<div style="position:absolute;right:111.8px;top:119.3px;font-size:7.9px;line-height:7px;color:#333;white-space:nowrap"><span style="display:inline-block;transform:scaleX(0.885);transform-origin:right">30<span style="font-size:6.5px;color:#777"> pcs</span></span></div>
<div style="position:absolute;right:46.7px;top:119.3px;font-size:7.9px;line-height:7px;color:#d0452b;white-space:nowrap"><span style="display:inline-block;transform:scaleX(0.885);transform-origin:right">-10<span style="font-size:6.5px;color:#777"> pcs</span></span></div>
<svg style="position:absolute;left:633.4px;top:117.0px;width:8.8px;height:8.8px" viewBox="0 0 24 24"><path fill="#2457b3" d="M4 6H2v14c0 1.1.9 2 2 2h14v-2H4V6zm16-4H8c-1.1 0-2 .9-2 2v12c0 1.1.9 2 2 2h12c1.1 0 2-.9 2-2V4c0-1.1-.9-2-2-2zm-1 9h-4v4h-2v-4H9V9h4V5h2v4h4v2z"/></svg>
<div style="position:absolute;left:646.1px;top:116.7px;font-size:6.2px;line-height:7px;color:#2c5cb0;font-weight:700;white-space:nowrap">Buy</div>
<div style="position:absolute;left:4.6px;top:138.8px;width:7.9px;height:7.9px;box-sizing:border-box;border:1.2px solid #a4a4a4;border-radius:1.2px;background:#fff"></div>
<div style="position:absolute;left:19.6px;top:140.6px;font-size:7.9px;line-height:7px;color:#3766b5;white-space:nowrap"><span style="display:inline-block;transform:scaleX(0.905);transform-origin:left"><span style="text-decoration:underline;text-underline-offset:0.4px;text-decoration-thickness:0.5px;text-decoration-color:rgba(52,99,180,0.6);text-decoration-skip-ink:none">Bluetooth speaker / White</span></span></div>
<div style="position:absolute;left:138.1px;top:140.6px;font-size:7.9px;line-height:7px;color:#333;white-space:nowrap"><span style="display:inline-block;transform:scaleX(0.842);transform-origin:left">BT-AO-1200</span></div>
<div style="position:absolute;left:187.7px;top:140.6px;font-size:7.9px;line-height:7px;color:#333;white-space:nowrap"><span style="display:inline-block;transform:scaleX(0.919);transform-origin:left">Audio - output</span></div>
<div style="position:absolute;right:373.1px;top:140.6px;font-size:7.9px;line-height:7px;color:#3766b5;white-space:nowrap"><span style="display:inline-block;transform:scaleX(0.885);transform-origin:right"><span style="text-decoration:underline;text-underline-offset:0.4px;text-decoration-thickness:0.5px;text-decoration-color:rgba(52,99,180,0.6);text-decoration-skip-ink:none">0<span style="font-size:5.7px"> USD</span></span></span></div>
<div style="position:absolute;right:313.0px;top:140.6px;font-size:7.9px;line-height:7px;color:#3766b5;white-space:nowrap"><span style="display:inline-block;transform:scaleX(0.885);transform-origin:right"><span style="text-decoration:underline;text-underline-offset:0.4px;text-decoration-thickness:0.5px;text-decoration-color:rgba(52,99,180,0.6);text-decoration-skip-ink:none">0<span style="font-size:5.7px"> USD</span></span></span></div>
<div style="position:absolute;right:270.1px;top:140.6px;font-size:7.9px;line-height:7px;color:#3766b5;white-space:nowrap"><span style="display:inline-block;transform:scaleX(0.885);transform-origin:right"><span style="text-decoration:underline;text-underline-offset:0.4px;text-decoration-thickness:0.5px;text-decoration-color:rgba(52,99,180,0.6);text-decoration-skip-ink:none">20<span style="font-size:6.4px"> pcs</span></span></span></div>
<div style="position:absolute;right:221.1px;top:140.6px;font-size:7.9px;line-height:7px;color:#3766b5;white-space:nowrap"><span style="display:inline-block;transform:scaleX(0.885);transform-origin:right"><span style="text-decoration:underline;text-underline-offset:0.4px;text-decoration-thickness:0.5px;text-decoration-color:rgba(52,99,180,0.6);text-decoration-skip-ink:none">1<span style="font-size:6.4px"> pcs</span></span></span></div>
<div style="position:absolute;right:170.1px;top:140.6px;font-size:7.9px;line-height:7px;color:#3766b5;white-space:nowrap"><span style="display:inline-block;transform:scaleX(0.885);transform-origin:right"><span style="text-decoration:underline;text-underline-offset:0.4px;text-decoration-thickness:0.5px;text-decoration-color:rgba(52,99,180,0.6);text-decoration-skip-ink:none">10<span style="font-size:6.4px"> pcs</span></span></span></div>
<div style="position:absolute;right:111.8px;top:140.6px;font-size:7.9px;line-height:7px;color:#333;white-space:nowrap"><span style="display:inline-block;transform:scaleX(0.885);transform-origin:right">10<span style="font-size:6.5px;color:#777"> pcs</span></span></div>
<div style="position:absolute;right:46.7px;top:140.6px;font-size:7.9px;line-height:7px;color:#333;white-space:nowrap"><span style="display:inline-block;transform:scaleX(0.885);transform-origin:right">1<span style="font-size:6.5px;color:#777"> pcs</span></span></div>
<svg style="position:absolute;left:633.4px;top:138.3px;width:8.8px;height:8.8px" viewBox="0 0 24 24"><path fill="#2457b3" d="M4 6H2v14c0 1.1.9 2 2 2h14v-2H4V6zm16-4H8c-1.1 0-2 .9-2 2v12c0 1.1.9 2 2 2h12c1.1 0 2-.9 2-2V4c0-1.1-.9-2-2-2zm-1 9h-4v4h-2v-4H9V9h4V5h2v4h4v2z"/></svg>
<div style="position:absolute;left:646.1px;top:138.0px;font-size:6.2px;line-height:7px;color:#2c5cb0;font-weight:700;white-space:nowrap">Buy</div>
<div style="position:absolute;left:4.6px;top:160.1px;width:7.9px;height:7.9px;box-sizing:border-box;border:1.2px solid #a4a4a4;border-radius:1.2px;background:#fff"></div>
<div style="position:absolute;left:19.6px;top:161.9px;font-size:7.9px;line-height:7px;color:#3766b5;white-space:nowrap"><span style="display:inline-block;transform:scaleX(0.905);transform-origin:left"><span style="text-decoration:underline;text-underline-offset:0.4px;text-decoration-thickness:0.5px;text-decoration-color:rgba(52,99,180,0.6);text-decoration-skip-ink:none">Dynamic microphone bag / Black</span></span></div>
<div style="position:absolute;left:138.1px;top:161.9px;font-size:7.9px;line-height:7px;color:#333;white-space:nowrap"><span style="display:inline-block;transform:scaleX(0.842);transform-origin:left">BG-A-21</span></div>
<div style="position:absolute;left:187.7px;top:161.9px;font-size:7.9px;line-height:7px;color:#333;white-space:nowrap"><span style="display:inline-block;transform:scaleX(0.919);transform-origin:left">Accessories</span></div>
<div style="position:absolute;right:373.1px;top:161.9px;font-size:7.9px;line-height:7px;color:#3766b5;white-space:nowrap"><span style="display:inline-block;transform:scaleX(0.885);transform-origin:right"><span style="text-decoration:underline;text-underline-offset:0.4px;text-decoration-thickness:0.5px;text-decoration-color:rgba(52,99,180,0.6);text-decoration-skip-ink:none">30<span style="font-size:5.7px"> USD</span></span></span></div>
<div style="position:absolute;right:313.0px;top:161.9px;font-size:7.9px;line-height:7px;color:#3766b5;white-space:nowrap"><span style="display:inline-block;transform:scaleX(0.885);transform-origin:right"><span style="text-decoration:underline;text-underline-offset:0.4px;text-decoration-thickness:0.5px;text-decoration-color:rgba(52,99,180,0.6);text-decoration-skip-ink:none">3600.00</span></span></div>
<div style="position:absolute;right:270.1px;top:161.9px;font-size:7.9px;line-height:7px;color:#3766b5;white-space:nowrap"><span style="display:inline-block;transform:scaleX(0.885);transform-origin:right"><span style="text-decoration:underline;text-underline-offset:0.4px;text-decoration-thickness:0.5px;text-decoration-color:rgba(52,99,180,0.6);text-decoration-skip-ink:none">120<span style="font-size:6.4px"> pcs</span></span></span></div>
<div style="position:absolute;right:221.1px;top:161.9px;font-size:7.9px;line-height:7px;color:#3766b5;white-space:nowrap"><span style="display:inline-block;transform:scaleX(0.885);transform-origin:right"><span style="text-decoration:underline;text-underline-offset:0.4px;text-decoration-thickness:0.5px;text-decoration-color:rgba(52,99,180,0.6);text-decoration-skip-ink:none">0<span style="font-size:6.4px"> pcs</span></span></span></div>
<div style="position:absolute;right:170.1px;top:161.9px;font-size:7.9px;line-height:7px;color:#3766b5;white-space:nowrap"><span style="display:inline-block;transform:scaleX(0.885);transform-origin:right"><span style="text-decoration:underline;text-underline-offset:0.4px;text-decoration-thickness:0.5px;text-decoration-color:rgba(52,99,180,0.6);text-decoration-skip-ink:none">1<span style="font-size:6.4px"> pcs</span></span></span></div>
<div style="position:absolute;right:111.8px;top:161.9px;font-size:7.9px;line-height:7px;color:#333;white-space:nowrap"><span style="display:inline-block;transform:scaleX(0.885);transform-origin:right">15<span style="font-size:6.5px;color:#777"> pcs</span></span></div>
<div style="position:absolute;right:46.7px;top:161.9px;font-size:7.9px;line-height:7px;color:#333;white-space:nowrap"><span style="display:inline-block;transform:scaleX(0.885);transform-origin:right">104<span style="font-size:6.5px;color:#777"> pcs</span></span></div>
<svg style="position:absolute;left:633.4px;top:159.6px;width:8.8px;height:8.8px" viewBox="0 0 24 24"><path fill="#2457b3" d="M4 6H2v14c0 1.1.9 2 2 2h14v-2H4V6zm16-4H8c-1.1 0-2 .9-2 2v12c0 1.1.9 2 2 2h12c1.1 0 2-.9 2-2V4c0-1.1-.9-2-2-2zm-1 9h-4v4h-2v-4H9V9h4V5h2v4h4v2z"/></svg>
<div style="position:absolute;left:646.1px;top:159.3px;font-size:6.2px;line-height:7px;color:#2c5cb0;font-weight:700;white-space:nowrap">Buy</div>
<div style="position:absolute;left:4.6px;top:181.4px;width:7.9px;height:7.9px;box-sizing:border-box;border:1.2px solid #a4a4a4;border-radius:1.2px;background:#fff"></div>
<div style="position:absolute;left:19.6px;top:183.2px;font-size:7.9px;line-height:7px;color:#3766b5;white-space:nowrap"><span style="display:inline-block;transform:scaleX(0.905);transform-origin:left"><span style="text-decoration:underline;text-underline-offset:0.4px;text-decoration-thickness:0.5px;text-decoration-color:rgba(52,99,180,0.6);text-decoration-skip-ink:none">Dynamic microphone bag / Grey</span></span></div>
<div style="position:absolute;left:138.1px;top:183.2px;font-size:7.9px;line-height:7px;color:#333;white-space:nowrap"><span style="display:inline-block;transform:scaleX(0.842);transform-origin:left">BG-A-22</span></div>
<div style="position:absolute;left:187.7px;top:183.2px;font-size:7.9px;line-height:7px;color:#333;white-space:nowrap"><span style="display:inline-block;transform:scaleX(0.919);transform-origin:left">Accessories</span></div>
<div style="position:absolute;right:373.1px;top:183.2px;font-size:7.9px;line-height:7px;color:#3766b5;white-space:nowrap"><span style="display:inline-block;transform:scaleX(0.885);transform-origin:right"><span style="text-decoration:underline;text-underline-offset:0.4px;text-decoration-thickness:0.5px;text-decoration-color:rgba(52,99,180,0.6);text-decoration-skip-ink:none">30<span style="font-size:5.7px"> USD</span></span></span></div>
<div style="position:absolute;right:313.0px;top:183.2px;font-size:7.9px;line-height:7px;color:#3766b5;white-space:nowrap"><span style="display:inline-block;transform:scaleX(0.885);transform-origin:right"><span style="text-decoration:underline;text-underline-offset:0.4px;text-decoration-thickness:0.5px;text-decoration-color:rgba(52,99,180,0.6);text-decoration-skip-ink:none">720.00</span></span></div>
<div style="position:absolute;right:270.1px;top:183.2px;font-size:7.9px;line-height:7px;color:#3766b5;white-space:nowrap"><span style="display:inline-block;transform:scaleX(0.885);transform-origin:right"><span style="text-decoration:underline;text-underline-offset:0.4px;text-decoration-thickness:0.5px;text-decoration-color:rgba(52,99,180,0.6);text-decoration-skip-ink:none">24<span style="font-size:6.4px"> pcs</span></span></span></div>
<div style="position:absolute;right:221.1px;top:183.2px;font-size:7.9px;line-height:7px;color:#3766b5;white-space:nowrap"><span style="display:inline-block;transform:scaleX(0.885);transform-origin:right"><span style="text-decoration:underline;text-underline-offset:0.4px;text-decoration-thickness:0.5px;text-decoration-color:rgba(52,99,180,0.6);text-decoration-skip-ink:none">0<span style="font-size:6.4px"> pcs</span></span></span></div>
<div style="position:absolute;right:170.1px;top:183.2px;font-size:7.9px;line-height:7px;color:#3766b5;white-space:nowrap"><span style="display:inline-block;transform:scaleX(0.885);transform-origin:right"><span style="text-decoration:underline;text-underline-offset:0.4px;text-decoration-thickness:0.5px;text-decoration-color:rgba(52,99,180,0.6);text-decoration-skip-ink:none">0<span style="font-size:6.4px"> pcs</span></span></span></div>
<div style="position:absolute;right:111.8px;top:183.2px;font-size:7.9px;line-height:7px;color:#333;white-space:nowrap"><span style="display:inline-block;transform:scaleX(0.885);transform-origin:right">15<span style="font-size:6.5px;color:#777"> pcs</span></span></div>
<div style="position:absolute;right:46.7px;top:183.2px;font-size:7.9px;line-height:7px;color:#333;white-space:nowrap"><span style="display:inline-block;transform:scaleX(0.885);transform-origin:right">9<span style="font-size:6.5px;color:#777"> pcs</span></span></div>
<svg style="position:absolute;left:633.4px;top:180.9px;width:8.8px;height:8.8px" viewBox="0 0 24 24"><path fill="#2457b3" d="M4 6H2v14c0 1.1.9 2 2 2h14v-2H4V6zm16-4H8c-1.1 0-2 .9-2 2v12c0 1.1.9 2 2 2h12c1.1 0 2-.9 2-2V4c0-1.1-.9-2-2-2zm-1 9h-4v4h-2v-4H9V9h4V5h2v4h4v2z"/></svg>
<div style="position:absolute;left:646.1px;top:180.6px;font-size:6.2px;line-height:7px;color:#2c5cb0;font-weight:700;white-space:nowrap">Buy</div>
<div style="position:absolute;left:4.6px;top:202.7px;width:7.9px;height:7.9px;box-sizing:border-box;border:1.2px solid #a4a4a4;border-radius:1.2px;background:#fff"></div>
<div style="position:absolute;left:19.6px;top:204.5px;font-size:7.9px;line-height:7px;color:#3766b5;white-space:nowrap"><span style="display:inline-block;transform:scaleX(0.905);transform-origin:left"><span style="text-decoration:underline;text-underline-offset:0.4px;text-decoration-thickness:0.5px;text-decoration-color:rgba(52,99,180,0.6);text-decoration-skip-ink:none">Dynamic microphone bag / White</span></span></div>
<div style="position:absolute;left:138.1px;top:204.5px;font-size:7.9px;line-height:7px;color:#333;white-space:nowrap"><span style="display:inline-block;transform:scaleX(0.842);transform-origin:left">BG-A-20</span></div>
<div style="position:absolute;left:187.7px;top:204.5px;font-size:7.9px;line-height:7px;color:#333;white-space:nowrap"><span style="display:inline-block;transform:scaleX(0.919);transform-origin:left">Accessories</span></div>
<div style="position:absolute;right:373.1px;top:204.5px;font-size:7.9px;line-height:7px;color:#3766b5;white-space:nowrap"><span style="display:inline-block;transform:scaleX(0.885);transform-origin:right"><span style="text-decoration:underline;text-underline-offset:0.4px;text-decoration-thickness:0.5px;text-decoration-color:rgba(52,99,180,0.6);text-decoration-skip-ink:none">30<span style="font-size:5.7px"> USD</span></span></span></div>
<div style="position:absolute;right:313.0px;top:204.5px;font-size:7.9px;line-height:7px;color:#3766b5;white-space:nowrap"><span style="display:inline-block;transform:scaleX(0.885);transform-origin:right"><span style="text-decoration:underline;text-underline-offset:0.4px;text-decoration-thickness:0.5px;text-decoration-color:rgba(52,99,180,0.6);text-decoration-skip-ink:none">2040.00</span></span></div>
<div style="position:absolute;right:270.1px;top:204.5px;font-size:7.9px;line-height:7px;color:#3766b5;white-space:nowrap"><span style="display:inline-block;transform:scaleX(0.885);transform-origin:right"><span style="text-decoration:underline;text-underline-offset:0.4px;text-decoration-thickness:0.5px;text-decoration-color:rgba(52,99,180,0.6);text-decoration-skip-ink:none">68<span style="font-size:6.4px"> pcs</span></span></span></div>
<div style="position:absolute;right:221.1px;top:204.5px;font-size:7.9px;line-height:7px;color:#3766b5;white-space:nowrap"><span style="display:inline-block;transform:scaleX(0.885);transform-origin:right"><span style="text-decoration:underline;text-underline-offset:0.4px;text-decoration-thickness:0.5px;text-decoration-color:rgba(52,99,180,0.6);text-decoration-skip-ink:none">0<span style="font-size:6.4px"> pcs</span></span></span></div>
<div style="position:absolute;right:170.1px;top:204.5px;font-size:7.9px;line-height:7px;color:#3766b5;white-space:nowrap"><span style="display:inline-block;transform:scaleX(0.885);transform-origin:right"><span style="text-decoration:underline;text-underline-offset:0.4px;text-decoration-thickness:0.5px;text-decoration-color:rgba(52,99,180,0.6);text-decoration-skip-ink:none">0<span style="font-size:6.4px"> pcs</span></span></span></div>
<div style="position:absolute;right:111.8px;top:204.5px;font-size:7.9px;line-height:7px;color:#333;white-space:nowrap"><span style="display:inline-block;transform:scaleX(0.885);transform-origin:right">15<span style="font-size:6.5px;color:#777"> pcs</span></span></div>
<div style="position:absolute;right:46.7px;top:204.5px;font-size:7.9px;line-height:7px;color:#333;white-space:nowrap"><span style="display:inline-block;transform:scaleX(0.885);transform-origin:right">53<span style="font-size:6.5px;color:#777"> pcs</span></span></div>
<svg style="position:absolute;left:633.4px;top:202.2px;width:8.8px;height:8.8px" viewBox="0 0 24 24"><path fill="#2457b3" d="M4 6H2v14c0 1.1.9 2 2 2h14v-2H4V6zm16-4H8c-1.1 0-2 .9-2 2v12c0 1.1.9 2 2 2h12c1.1 0 2-.9 2-2V4c0-1.1-.9-2-2-2zm-1 9h-4v4h-2v-4H9V9h4V5h2v4h4v2z"/></svg>
<div style="position:absolute;left:646.1px;top:201.9px;font-size:6.2px;line-height:7px;color:#2c5cb0;font-weight:700;white-space:nowrap">Buy</div>
<div style="position:absolute;left:4.6px;top:224.0px;width:7.9px;height:7.9px;box-sizing:border-box;border:1.2px solid #a4a4a4;border-radius:1.2px;background:#fff"></div>
<div style="position:absolute;left:19.6px;top:225.8px;font-size:7.9px;line-height:7px;color:#3766b5;white-space:nowrap"><span style="display:inline-block;transform:scaleX(0.905);transform-origin:left"><span style="text-decoration:underline;text-underline-offset:0.4px;text-decoration-thickness:0.5px;text-decoration-color:rgba(52,99,180,0.6);text-decoration-skip-ink:none">Dynamic microphone / Black</span></span></div>
<div style="position:absolute;left:138.1px;top:225.8px;font-size:7.9px;line-height:7px;color:#333;white-space:nowrap"><span style="display:inline-block;transform:scaleX(0.842);transform-origin:left">DYN-AI-31</span></div>
<div style="position:absolute;left:187.7px;top:225.8px;font-size:7.9px;line-height:7px;color:#333;white-space:nowrap"><span style="display:inline-block;transform:scaleX(0.919);transform-origin:left">Audio - input</span></div>
<div style="position:absolute;right:373.1px;top:225.8px;font-size:7.9px;line-height:7px;color:#3766b5;white-space:nowrap"><span style="display:inline-block;transform:scaleX(0.885);transform-origin:right"><span style="text-decoration:underline;text-underline-offset:0.4px;text-decoration-thickness:0.5px;text-decoration-color:rgba(52,99,180,0.6);text-decoration-skip-ink:none">170<span style="font-size:5.7px"> USD</span></span></span></div>
<div style="position:absolute;right:313.0px;top:225.8px;font-size:7.9px;line-height:7px;color:#3766b5;white-space:nowrap"><span style="display:inline-block;transform:scaleX(0.885);transform-origin:right"><span style="text-decoration:underline;text-underline-offset:0.4px;text-decoration-thickness:0.5px;text-decoration-color:rgba(52,99,180,0.6);text-decoration-skip-ink:none">5440.00</span></span></div>
<div style="position:absolute;right:270.1px;top:225.8px;font-size:7.9px;line-height:7px;color:#3766b5;white-space:nowrap"><span style="display:inline-block;transform:scaleX(0.885);transform-origin:right"><span style="text-decoration:underline;text-underline-offset:0.4px;text-decoration-thickness:0.5px;text-decoration-color:rgba(52,99,180,0.6);text-decoration-skip-ink:none">32<span style="font-size:6.4px"> pcs</span></span></span></div>
<div style="position:absolute;right:221.1px;top:225.8px;font-size:7.9px;line-height:7px;color:#3766b5;white-space:nowrap"><span style="display:inline-block;transform:scaleX(0.885);transform-origin:right"><span style="text-decoration:underline;text-underline-offset:0.4px;text-decoration-thickness:0.5px;text-decoration-color:rgba(52,99,180,0.6);text-decoration-skip-ink:none">0<span style="font-size:6.4px"> pcs</span></span></span></div>
<div style="position:absolute;right:170.1px;top:225.8px;font-size:7.9px;line-height:7px;color:#3766b5;white-space:nowrap"><span style="display:inline-block;transform:scaleX(0.885);transform-origin:right"><span style="text-decoration:underline;text-underline-offset:0.4px;text-decoration-thickness:0.5px;text-decoration-color:rgba(52,99,180,0.6);text-decoration-skip-ink:none">0<span style="font-size:6.4px"> pcs</span></span></span></div>
<div style="position:absolute;right:111.8px;top:225.8px;font-size:7.9px;line-height:7px;color:#333;white-space:nowrap"><span style="display:inline-block;transform:scaleX(0.885);transform-origin:right">15<span style="font-size:6.5px;color:#777"> pcs</span></span></div>
<div style="position:absolute;right:46.7px;top:225.8px;font-size:7.9px;line-height:7px;color:#333;white-space:nowrap"><span style="display:inline-block;transform:scaleX(0.885);transform-origin:right">17<span style="font-size:6.5px;color:#777"> pcs</span></span></div>
<svg style="position:absolute;left:633.4px;top:223.5px;width:8.8px;height:8.8px" viewBox="0 0 24 24"><path fill="#2457b3" d="M4 6H2v14c0 1.1.9 2 2 2h14v-2H4V6zm16-4H8c-1.1 0-2 .9-2 2v12c0 1.1.9 2 2 2h12c1.1 0 2-.9 2-2V4c0-1.1-.9-2-2-2zm-1 9h-4v4h-2v-4H9V9h4V5h2v4h4v2z"/></svg>
<div style="position:absolute;left:646.1px;top:223.2px;font-size:6.2px;line-height:7px;color:#2c5cb0;font-weight:700;white-space:nowrap">Buy</div>
<div style="position:absolute;left:4.6px;top:245.3px;width:7.9px;height:7.9px;box-sizing:border-box;border:1.2px solid #a4a4a4;border-radius:1.2px;background:#fff"></div>
<div style="position:absolute;left:19.6px;top:247.1px;font-size:7.9px;line-height:7px;color:#3766b5;white-space:nowrap"><span style="display:inline-block;transform:scaleX(0.905);transform-origin:left"><span style="text-decoration:underline;text-underline-offset:0.4px;text-decoration-thickness:0.5px;text-decoration-color:rgba(52,99,180,0.6);text-decoration-skip-ink:none">Dynamic microphone / Grey</span></span></div>
<div style="position:absolute;left:138.1px;top:247.1px;font-size:7.9px;line-height:7px;color:#333;white-space:nowrap"><span style="display:inline-block;transform:scaleX(0.842);transform-origin:left">DYN-AI-32</span></div>
<div style="position:absolute;left:187.7px;top:247.1px;font-size:7.9px;line-height:7px;color:#333;white-space:nowrap"><span style="display:inline-block;transform:scaleX(0.919);transform-origin:left">Audio - input</span></div>
<div style="position:absolute;right:373.1px;top:247.1px;font-size:7.9px;line-height:7px;color:#3766b5;white-space:nowrap"><span style="display:inline-block;transform:scaleX(0.885);transform-origin:right"><span style="text-decoration:underline;text-underline-offset:0.4px;text-decoration-thickness:0.5px;text-decoration-color:rgba(52,99,180,0.6);text-decoration-skip-ink:none">170<span style="font-size:5.7px"> USD</span></span></span></div>
<div style="position:absolute;right:313.0px;top:247.1px;font-size:7.9px;line-height:7px;color:#3766b5;white-space:nowrap"><span style="display:inline-block;transform:scaleX(0.885);transform-origin:right"><span style="text-decoration:underline;text-underline-offset:0.4px;text-decoration-thickness:0.5px;text-decoration-color:rgba(52,99,180,0.6);text-decoration-skip-ink:none">15300.00</span></span></div>
<div style="position:absolute;right:270.1px;top:247.1px;font-size:7.9px;line-height:7px;color:#3766b5;white-space:nowrap"><span style="display:inline-block;transform:scaleX(0.885);transform-origin:right"><span style="text-decoration:underline;text-underline-offset:0.4px;text-decoration-thickness:0.5px;text-decoration-color:rgba(52,99,180,0.6);text-decoration-skip-ink:none">90<span style="font-size:6.4px"> pcs</span></span></span></div>
<div style="position:absolute;right:221.1px;top:247.1px;font-size:7.9px;line-height:7px;color:#3766b5;white-space:nowrap"><span style="display:inline-block;transform:scaleX(0.885);transform-origin:right"><span style="text-decoration:underline;text-underline-offset:0.4px;text-decoration-thickness:0.5px;text-decoration-color:rgba(52,99,180,0.6);text-decoration-skip-ink:none">0<span style="font-size:6.4px"> pcs</span></span></span></div>
<div style="position:absolute;right:170.1px;top:247.1px;font-size:7.9px;line-height:7px;color:#3766b5;white-space:nowrap"><span style="display:inline-block;transform:scaleX(0.885);transform-origin:right"><span style="text-decoration:underline;text-underline-offset:0.4px;text-decoration-thickness:0.5px;text-decoration-color:rgba(52,99,180,0.6);text-decoration-skip-ink:none">1<span style="font-size:6.4px"> pcs</span></span></span></div>
<div style="position:absolute;right:111.8px;top:247.1px;font-size:7.9px;line-height:7px;color:#333;white-space:nowrap"><span style="display:inline-block;transform:scaleX(0.885);transform-origin:right">15<span style="font-size:6.5px;color:#777"> pcs</span></span></div>
<div style="position:absolute;right:46.7px;top:247.1px;font-size:7.9px;line-height:7px;color:#333;white-space:nowrap"><span style="display:inline-block;transform:scaleX(0.885);transform-origin:right">74<span style="font-size:6.5px;color:#777"> pcs</span></span></div>
<svg style="position:absolute;left:633.4px;top:244.8px;width:8.8px;height:8.8px" viewBox="0 0 24 24"><path fill="#2457b3" d="M4 6H2v14c0 1.1.9 2 2 2h14v-2H4V6zm16-4H8c-1.1 0-2 .9-2 2v12c0 1.1.9 2 2 2h12c1.1 0 2-.9 2-2V4c0-1.1-.9-2-2-2zm-1 9h-4v4h-2v-4H9V9h4V5h2v4h4v2z"/></svg>
<div style="position:absolute;left:646.1px;top:244.5px;font-size:6.2px;line-height:7px;color:#2c5cb0;font-weight:700;white-space:nowrap">Buy</div>
</div>
<div style="position:absolute;left:731.1px;top:376.5px;width:23px;height:23px;border-radius:50%;background:#102a3a;box-shadow:0 1px 3px rgba(0,0,0,0.3)"></div>
<svg style="position:absolute;left:737.5px;top:383px;width:10px;height:11.2px" viewBox="0 0 10 11.2"><path fill="#fff" d="M1.2 0h7.6a1.2 1.2 0 0 1 1.2 1.2v10l-2.6-1.6h-6.2a1.2 1.2 0 0 1-1.2-1.2v-7.2a1.2 1.2 0 0 1 1.2-1.2z"/><path d="M2.2 7.0q2.8 1.6 5.6 0" stroke="#102a3a" stroke-width="0.9" fill="none"/></svg>
</body></html>
